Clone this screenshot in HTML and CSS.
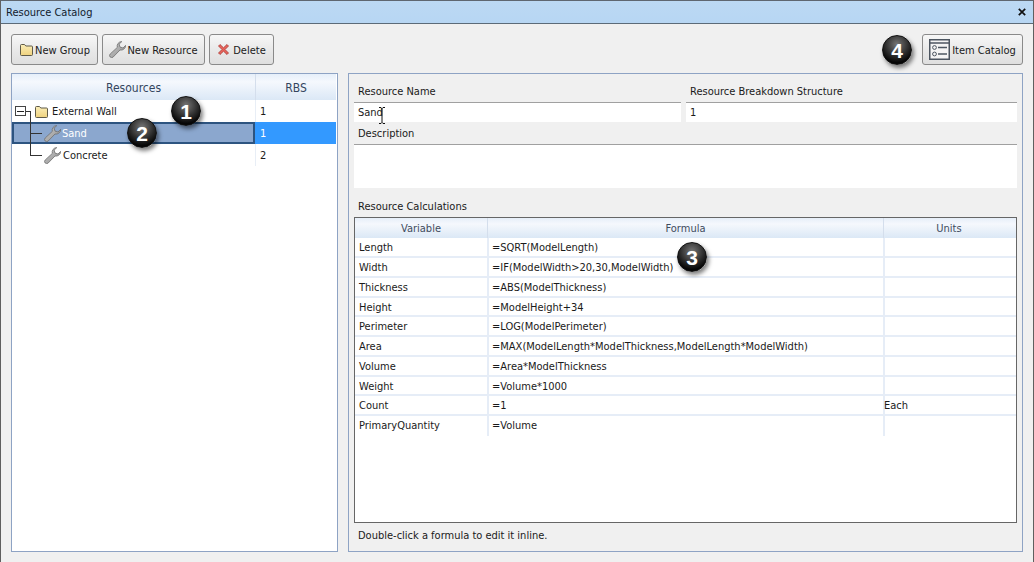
FILE: index.html
```html
<!DOCTYPE html>
<html lang="en">
<head>
<meta charset="utf-8">
<title>Resource Catalog</title>
<link rel="stylesheet" href="styles.css">
</head>
<body>
<svg class="defs" width="0" height="0" aria-hidden="true">
  <defs>
    <linearGradient id="folderFill" x1="0" y1="0" x2="0" y2="1"><stop offset="0" stop-color="#fbeeb8"/><stop offset="1" stop-color="#efd27e"/></linearGradient>
    <linearGradient id="wrenchFill" x1="0" y1="0" x2="1" y2="1"><stop offset="0" stop-color="#c8c8c8"/><stop offset="1" stop-color="#929292"/></linearGradient>
    <symbol id="folder" viewBox="0 0 15 13"><path d="M1.5 2.5 a1 1 0 0 1 1-1 h3 l1.3 1.5 h5.7 a1 1 0 0 1 1 1 v7.5 a1 1 0 0 1-1 1 h-10 a1 1 0 0 1-1-1z" fill="url(#folderFill)" stroke="#5f5a48" stroke-width="1"/></symbol>
    <symbol id="wrench" viewBox="0 0 17 17"><path d="M12.8.6a4.6 4.6 0 0 0-4.5 5.8L1.2 13a2.1 2.1 0 0 0 3 3l6.8-7a4.6 4.6 0 0 0 5.6-4.6L14 7l-3-.9-.9-3z" fill="url(#wrenchFill)" stroke="#6f6f6f" stroke-width=".8"/></symbol>
  </defs>
</svg>
<div class="window">
  <header class="titlebar"><span>Resource Catalog</span><svg class="close" viewBox="0 0 8 8"><path d="M.8.8l6.4 6.4M7.2.8.8 7.2" stroke="#111" stroke-width="1.7" fill="none"/></svg></header>
  <div class="content">
    <div class="toolbar">
      <button class="btn"><svg class="ico-folder"><use href="#folder"/></svg>New Group</button>
      <button class="btn"><svg class="ico-wrench"><use href="#wrench"/></svg>New Resource</button>
      <button class="btn"><svg class="ico-x" viewBox="0 0 13 13"><path d="M1.5 3 3 1.5l3.5 3.3L10 1.5 11.5 3 8 6.5l3.5 3.5-1.5 1.5L6.5 8.2 3 11.5 1.5 10 5 6.5z" fill="#e8645c" stroke="#a83a34" stroke-width=".8"/></svg>Delete</button>
      <button class="btn catalog"><svg class="ico-cat" viewBox="0 0 21 21"><rect x=".75" y=".75" width="19.5" height="19.5" fill="#f4f4f4" stroke="#4c5560" stroke-width="1.5"/><path d="M1 4h19" stroke="#4c5560" stroke-width="1.5"/><circle cx="5.5" cy="8.5" r="1.9" fill="none" stroke="#4c5560"/><circle cx="5.5" cy="15" r="1.9" fill="none" stroke="#4c5560"/><path d="M9 8.5h9M9 15h9" stroke="#4c5560" stroke-width="1.5"/></svg>Item Catalog</button>
    </div>
    <div class="panes">
      <section class="tree">
        <div class="tree-head"><div class="th">Resources</div><div class="th">RBS</div></div>
        <div class="tree-row">
          <div class="name lvl0"><span class="expander"></span><svg class="ico-folder"><use href="#folder"/></svg>External Wall</div>
          <div class="rbs">1</div>
        </div>
        <div class="tree-row selected">
          <div class="name lvl1"><svg class="ico-wrench"><use href="#wrench"/></svg>Sand</div>
          <div class="rbs">1</div>
        </div>
        <div class="tree-row">
          <div class="name lvl1"><svg class="ico-wrench"><use href="#wrench"/></svg>Concrete</div>
          <div class="rbs">2</div>
        </div>
        <span class="conn conn-v"></span><span class="conn conn-a"></span><span class="conn conn-b"></span><span class="conn conn-c"></span>
      </section>
      <section class="detail">
        <div class="fields">
          <div class="field"><label>Resource Name</label><div class="input">Sand</div></div>
          <div class="field"><label>Resource Breakdown Structure</label><div class="input">1</div></div>
        </div>
        <label class="desc-label">Description</label>
        <div class="textarea"></div>
        <label class="calc-label">Resource Calculations</label>
        <div class="calc">
          <div class="calc-head"><div class="th">Variable</div><div class="th">Formula</div><div class="th">Units</div></div>
          <div class="calc-row"><div>Length</div><div>=SQRT(ModelLength)</div><div></div></div>
          <div class="calc-row"><div>Width</div><div>=IF(ModelWidth&gt;20,30,ModelWidth)</div><div></div></div>
          <div class="calc-row"><div>Thickness</div><div>=ABS(ModelThickness)</div><div></div></div>
          <div class="calc-row"><div>Height</div><div>=ModelHeight+34</div><div></div></div>
          <div class="calc-row"><div>Perimeter</div><div>=LOG(ModelPerimeter)</div><div></div></div>
          <div class="calc-row"><div>Area</div><div>=MAX(ModelLength*ModelThickness,ModelLength*ModelWidth)</div><div></div></div>
          <div class="calc-row"><div>Volume</div><div>=Area*ModelThickness</div><div></div></div>
          <div class="calc-row"><div>Weight</div><div>=Volume*1000</div><div></div></div>
          <div class="calc-row"><div>Count</div><div>=1</div><div class="units">Each</div></div>
          <div class="calc-row last"><div>PrimaryQuantity</div><div>=Volume</div><div></div></div>
        </div>
        <p class="hint">Double-click a formula to edit it inline.</p>
      </section>
    </div>
  </div>
  <svg class="cursor" viewBox="0 0 8 17"><path d="M1 .5h2l1 1 1-1h2M4 1.5v14M1 16.5h2l1-1 1 1h2" fill="none" stroke="#111" stroke-width="1"/></svg>
  <span class="badge b1">1</span>
  <span class="badge b2">2</span>
  <span class="badge b3">3</span>
  <span class="badge b4">4</span>
</div>
</body>
</html>
```
FILE: styles.css
```css
* { box-sizing: border-box; }
html, body { margin: 0; height: 100%; overflow: hidden; }
body { font: 11px/14px "DejaVu Sans Condensed", "DejaVu Sans", sans-serif; font-stretch: condensed; color: #1a1a1a; background: #f0f0f0; }
.defs { position: absolute; }
.window { position: relative; width: 1034px; height: 562px; display: flex; flex-direction: column; border-width: 1px 1px 0; border-style: solid; border-color: #5f6770 #5f5f5f; background: #f0f0f0; }
.titlebar { height: 23px; flex: none; display: flex; justify-content: space-between; align-items: center; padding: 2px 7px 0 5px; background: linear-gradient(#bcd9f3, #b7d6f3); border-bottom: 1px solid #5c6b78; color: #12202c; }
.close { width: 8px; height: 8px; margin-top: -2px; }
.content { flex: 1; display: flex; flex-direction: column; padding: 10px 10px 10px; gap: 8px; min-height: 0; }
.toolbar { display: flex; gap: 4px; height: 31px; flex: none; }
.btn { display: flex; align-items: center; justify-content: center; gap: 1px; height: 31px; padding: 3px 0 0; font: inherit; color: #1a1a1a; border: 1px solid #8a8a8a; border-radius: 3px; background: linear-gradient(#f7f7f7, #e9e9e9 50%, #dfdfdf); }
.btn svg { margin-top: -3px; }
.btn:nth-child(1) { width: 87px; }
.btn:nth-child(2) { width: 103px; }
.btn:nth-child(3) { width: 65px; }
.btn.catalog { width: 101px; margin-left: auto; gap: 2px; padding-top: 2px; }
.btn.catalog svg { margin-top: -2px; }
.ico-folder { width: 15px; height: 13px; flex: none; }
.ico-wrench { width: 17px; height: 17px; flex: none; }
.ico-x { width: 13px; height: 13px; flex: none; margin-right: 2px; }
.ico-cat { width: 21px; height: 21px; flex: none; }
.panes { flex: 1; display: flex; gap: 10px; min-height: 0; }
.tree { position: relative; width: 327px; flex: none; background: #fff; border: 1px solid #8ea3c4; }
.th { display: flex; align-items: center; justify-content: center; padding-top: 2px; color: #3f4c5e; background: linear-gradient(#e6eff9, #f5f8fd 30%, #dbe8f6); }
.th + .th { border-left: 1px solid #d4deec; }
.tree-head { display: grid; grid-template-columns: 243px 81px; height: 26px; }
.tree-head .th { font-size: 12px; color: #34455e; }
.tree-row { display: grid; grid-template-columns: 243px 81px; grid-template-rows: 22px; height: 22px; line-height: 24px; }
.name { display: flex; align-items: flex-start; white-space: nowrap; min-height: 0; }
.name svg { align-self: center; }
.lvl0 { padding-left: 22px; gap: 3px; }
.lvl1 { padding-left: 32px; gap: 2px; }
.rbs { padding-left: 4px; border-left: 1px solid #e8eef6; }
.selected .name { background: #8ba7ce; color: #fff; border: 2px solid #2d5480; padding-left: 30px; line-height: 20px; }
.selected .name svg { margin-right: -1px; }
.selected .rbs { background: #3399ff; color: #fff; border-left: 0; padding-left: 5px; }
.expander { position: absolute; left: 3px; top: 32px; width: 11px; height: 10px; border: 1px solid #444; background: linear-gradient(#222, #222) center / 7px 1px no-repeat #fff; }
.conn { position: absolute; background: #333; }
.conn-v { left: 18px; top: 37px; width: 1px; height: 44px; }
.conn-a { left: 14px; top: 37px; width: 5px; height: 1px; }
.conn-b { left: 18px; top: 59px; width: 12px; height: 1px; }
.conn-c { left: 18px; top: 81px; width: 12px; height: 1px; }
.detail { flex: 1; display: flex; flex-direction: column; border: 1px solid #8ea3c4; padding: 11px 5px 0; min-width: 0; }
label { display: block; padding-left: 4px; line-height: 14px; }
.fields { display: grid; grid-template-columns: 327px 331px; gap: 5px; }
.field label { margin-bottom: 3px; }
.input { height: 20px; line-height: 19px; padding-left: 4px; background: #fff; border-top: 1px solid #a0a0a0; }
.desc-label { margin-top: 5px; }
.textarea { height: 44px; margin-top: 3px; background: #fff; border-top: 1px solid #a0a0a0; flex: none; }
.calc-label { margin-top: 12px; }
.calc { margin-top: 3px; height: 306px; flex: none; background: #fff; border: 1px solid #666; }
.calc-head { display: grid; grid-template-columns: 132px 396px 1fr; height: 20.3px; }
.calc-head .th:last-child { padding-right: 2px; }
.calc-row { display: grid; grid-template-columns: 132px 396px 1fr; height: 19.75px; line-height: 19px; border-bottom: 2px solid #e6edf7; }
.calc-row.last { border-bottom: 0; }
.calc-row > div { padding-left: 4px; white-space: nowrap; }
.calc-row > div + div { border-left: 2px solid #e6edf7; padding-left: 3px; }
.calc-row > .units { padding-left: 0; text-indent: -1px; }
.hint { margin: 6px 0 0 4px; line-height: 14px; }
.cursor { position: absolute; left: 377px; top: 106px; width: 8px; height: 17px; }
.badge { position: absolute; width: 30px; height: 30px; border-radius: 50%; display: flex; align-items: center; justify-content: center; color: #fff; font: 700 21px/1 "Liberation Sans", sans-serif; background: radial-gradient(circle at 50% 30%, #777, #2a2a2a 50%, #060606 75%); border: 1px solid #111; box-shadow: 2px 3px 4px rgba(0,0,0,.5); }
.b1 { left: 170px; top: 95px; }
.b2 { left: 126px; top: 117px; }
.b3 { left: 676px; top: 241px; }
.b4 { left: 881px; top: 34px; }
```
